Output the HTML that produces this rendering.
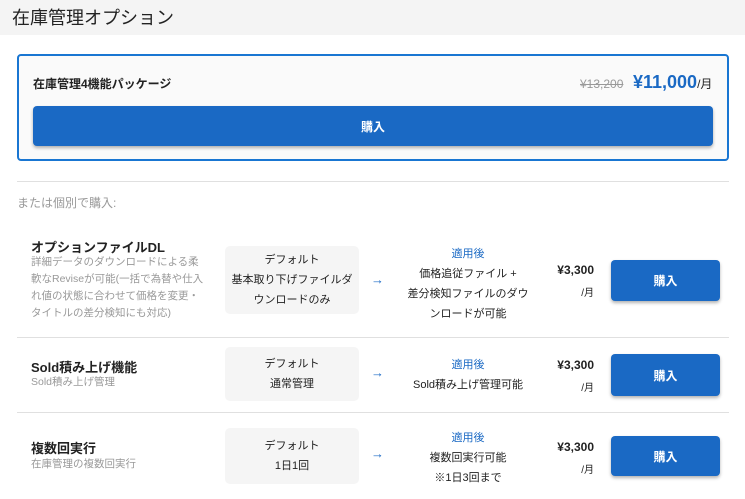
<!DOCTYPE html>
<html><head><meta charset="utf-8"><style>
*{margin:0;padding:0;box-sizing:border-box}
body{width:745px;height:499px;overflow:hidden;background:#fff;font-family:"Liberation Sans","Noto Sans CJK JP",sans-serif;color:#222;position:relative}
.a{position:absolute}
.hdr{left:0;top:0;width:745px;height:35px;background:#f4f4f4}
.btn{background:#1a69c4;color:#fff;font-weight:bold;font-size:12px;border-radius:4px;box-shadow:0 2px 3px rgba(0,0,0,.3);display:flex;align-items:center;justify-content:center}
.def{background:#f5f5f5;border-radius:5px;font-size:11px;text-align:center;line-height:20px;display:flex;flex-direction:column;justify-content:center;width:134px;left:225px}
.aft{font-size:11px;text-align:center;line-height:20px;width:150px;left:393px}
.aft b{color:#1a69c4;font-weight:normal}
.t{left:31px;font-size:13px;font-weight:bold}
.d{left:31px;font-size:10.5px;color:#999;line-height:17px;width:175px}
.p{left:530px;width:64px;text-align:right;font-size:12px;font-weight:bold;line-height:22px}
.p span{font-weight:normal;font-size:10px}
.arr{left:371px;color:#1a69c4;font-size:13px}
.hr{left:17px;width:712px;height:1px;background:#e0e0e0}
</style></head><body>
<div class="a hdr"></div>
<div class="a" style="left:12px;top:4px;font-size:18px">在庫管理オプション</div>
<div class="a" style="left:17px;top:54px;width:712px;height:107px;border:2px solid #1976d2;border-radius:4px;background:#fafafa"></div>
<div class="a" style="left:33px;top:75px;font-size:12px;font-weight:bold">在庫管理4機能パッケージ</div>
<div class="a" style="left:580px;top:77px;font-size:12px;color:#999;text-decoration:line-through">¥13,200</div>
<div class="a" style="left:633px;top:72px;font-size:18px;font-weight:bold;color:#1a69c4">¥11,000<span style="font-size:12px;color:#222;font-weight:normal">/月</span></div>
<div class="a btn" style="left:33px;top:106px;width:680px;height:40px">購入</div>
<div class="a hr" style="top:181px"></div>
<div class="a" style="left:17px;top:194px;font-size:12px;color:#999">または個別で購入:</div>

<div class="a t" style="top:237px">オプションファイルDL</div>
<div class="a d" style="top:254px">詳細データのダウンロードによる柔軟なReviseが可能(一括で為替や仕入れ値の状態に合わせて価格を変更・タイトルの差分検知にも対応)</div>
<div class="a def" style="top:246px;height:68px">デフォルト<br>基本取り下げファイルダ<br>ウンロードのみ</div>
<div class="a arr" style="top:272px">→</div>
<div class="a aft" style="top:244px"><b>適用後</b><br>価格追従ファイル +<br>差分検知ファイルのダウ<br>ンロードが可能</div>
<div class="a p" style="top:259px">¥3,300<br><span>/月</span></div>
<div class="a btn" style="left:611px;top:260px;width:109px;height:41px">購入</div>
<div class="a hr" style="top:337px"></div>

<div class="a t" style="top:357px">Sold積み上げ機能</div>
<div class="a d" style="top:374px">Sold積み上げ管理</div>
<div class="a def" style="top:347px;height:54px">デフォルト<br>通常管理</div>
<div class="a arr" style="top:365px">→</div>
<div class="a aft" style="top:355px"><b>適用後</b><br>Sold積み上げ管理可能</div>
<div class="a p" style="top:354px">¥3,300<br><span>/月</span></div>
<div class="a btn" style="left:611px;top:354px;width:109px;height:42px">購入</div>
<div class="a hr" style="top:412px"></div>

<div class="a t" style="top:438px">複数回実行</div>
<div class="a d" style="top:456px">在庫管理の複数回実行</div>
<div class="a def" style="top:428px;height:56px">デフォルト<br>1日1回</div>
<div class="a arr" style="top:446px">→</div>
<div class="a aft" style="top:428px"><b>適用後</b><br>複数回実行可能<br>※1日3回まで</div>
<div class="a p" style="top:436px">¥3,300<br><span>/月</span></div>
<div class="a btn" style="left:611px;top:436px;width:109px;height:40px">購入</div>
</body></html>
